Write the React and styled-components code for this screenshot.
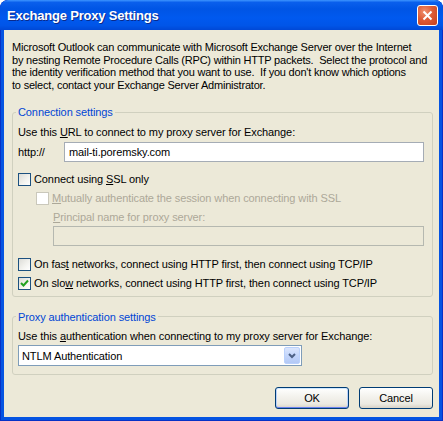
import React from 'react';
import styled, { createGlobalStyle } from 'styled-components';

const GlobalStyle = createGlobalStyle`
  html, body {
    margin: 0;
    padding: 0;
    background: #ffffff;
  }
  body {
    font-family: "Liberation Sans", Arial, sans-serif;
    font-size: 11px;
    letter-spacing: -0.1px;
    color: #000;
  }
`;

const Window = styled.div`
  width: 443px;
  height: 421px;
  box-sizing: border-box;
  display: flex;
  flex-direction: column;
  background: #0554e2;
  border-radius: 8px 8px 0 0;
  box-shadow: inset 0 0 0 1px #0731c6;
  overflow: hidden;
`;

const TitleBar = styled.div`
  height: 30px;
  flex: none;
  display: flex;
  align-items: center;
  justify-content: space-between;
  padding: 0 5px 0 7px;
  border-radius: 8px 8px 0 0;
  background: linear-gradient(
    to bottom,
    #3d95ff 0%,
    #0a5fec 8%,
    #0055e5 30%,
    #0059ef 60%,
    #0055e8 85%,
    #0048d6 100%
  );
`;

const Title = styled.span`
  color: #fff;
  font-weight: bold;
  font-size: 13px;
  text-shadow: 1px 1px 0 #0b2a8a;
  letter-spacing: -0.2px;
`;

const CloseButton = styled.div`
  width: 21px;
  height: 21px;
  box-sizing: border-box;
  border: 1px solid #fff;
  border-radius: 3px;
  display: flex;
  align-items: center;
  justify-content: center;
  background: radial-gradient(circle at 35% 30%, #f0916f 0%, #dd5b36 45%, #c4401c 100%);
`;

const Client = styled.div`
  flex: 1;
  margin: 0 4px 4px;
  background: #ece9d8;
  padding: 11px 6px 0 8px;
  display: flex;
  flex-direction: column;
`;

const Intro = styled.p`
  margin: 0;
  line-height: 12.5px;
  white-space: nowrap;
  letter-spacing: -0.2px;
`;

const Group = styled.fieldset`
  margin: ${p => p.$top}px 0 0;
  padding: 7px 8px ${p => p.$bottom}px 5px;
  border: 1px solid #d0d0bf;
  border-radius: 3px;
  min-width: 0;
`;

const Legend = styled.legend`
  color: #0046d5;
  padding: 0 2px;
  margin-left: -2px;
  line-height: 12.5px;
`;

const Text = styled.div`
  line-height: 13px;
  margin-top: ${p => p.$top || 0}px;
  margin-left: ${p => p.$left || 0}px;
  color: ${p => (p.$disabled ? '#aca899' : '#000')};
`;

const UrlRow = styled.div`
  display: flex;
  align-items: center;
  margin-top: 3px;
`;

const Prefix = styled.span`
  width: 46px;
  flex: none;
`;

const TextBox = styled.div`
  flex: 1;
  height: 20px;
  box-sizing: border-box;
  border: 1px solid ${p => (p.$disabled ? '#b5b8b0' : '#a5acb5')};
  background: ${p => (p.$disabled ? '#ece9d8' : '#fff')};
  display: flex;
  align-items: center;
  padding-left: 4px;
  margin-top: ${p => p.$top || 0}px;
  margin-left: ${p => p.$left || 0}px;
`;

const CheckRow = styled.label`
  display: flex;
  align-items: center;
  gap: 3px;
  height: 13px;
  margin-top: ${p => p.$top}px;
  margin-left: ${p => p.$left || 0}px;
  color: ${p => (p.$disabled ? '#aca899' : '#000')};
`;

const Box = styled.span`
  width: 13px;
  height: 13px;
  box-sizing: border-box;
  flex: none;
  display: flex;
  align-items: center;
  justify-content: center;
  border: 1px solid ${p => (p.$disabled ? '#cac8bb' : '#1c5180')};
  background: ${p =>
    p.$disabled ? '#fff' : 'linear-gradient(135deg, #dcdcd7 0%, #f4f4f0 60%, #ffffff 100%)'};
`;

const Select = styled.div`
  width: 284px;
  height: 21px;
  box-sizing: border-box;
  margin-top: 2px;
  border: 1px solid #7f9db9;
  background: #fff;
  display: flex;
  align-items: center;
  justify-content: space-between;
  padding: 1px 1px 1px 3px;
`;

const DropButton = styled.span`
  width: 16px;
  height: 17px;
  box-sizing: border-box;
  border: 1px solid #bad1fc;
  border-radius: 2px;
  background: linear-gradient(to bottom, #dbe6fd 0%, #c4d6fb 50%, #b3c9f6 100%);
  display: flex;
  align-items: center;
  justify-content: center;
`;

const ButtonBar = styled.div`
  display: flex;
  justify-content: flex-end;
  gap: 10px;
  margin-top: 12px;
`;

const Button = styled.div`
  width: 74px;
  height: 22px;
  box-sizing: border-box;
  border: 1px solid #003c74;
  border-radius: 3px;
  display: flex;
  align-items: center;
  justify-content: center;
  background: linear-gradient(to bottom, #ffffff 0%, #f4f3ee 40%, #ebe9e1 80%, #d8d2c6 100%);
  box-shadow: ${p =>
    p.$default ? 'inset 0 1px 0 #cee7ff, inset 0 -1px 0 #6982ee, inset 1px 0 0 #b9d1fa, inset -1px 0 0 #b9d1fa' : 'none'};
`;

const Check = () => (
  <svg width="9" height="9" viewBox="0 0 9 9">
    <path d="M1 4 L3.5 6.5 L8 1.5" fill="none" stroke="#21a121" strokeWidth="2" />
  </svg>
);

const Checkbox = ({ checked, disabled, top, left, children }) => (
  <CheckRow $top={top} $left={left} $disabled={disabled}>
    <Box $disabled={disabled}>{checked && <Check />}</Box>
    <span>{children}</span>
  </CheckRow>
);

export default function App() {
  return (
    <>
      <GlobalStyle />
      <Window>
        <TitleBar>
          <Title>Exchange Proxy Settings</Title>
          <CloseButton>
            <svg width="11" height="11" viewBox="0 0 11 11">
              <path d="M1.5 1.5 L9.5 9.5 M9.5 1.5 L1.5 9.5" stroke="#fff" strokeWidth="2" />
            </svg>
          </CloseButton>
        </TitleBar>
        <Client>
          <Intro>
            Microsoft Outlook can communicate with Microsoft Exchange Server over the Internet
            <br />
            by nesting Remote Procedure Calls (RPC) within HTTP packets.&nbsp; Select the protocol and
            <br />
            the identity verification method that you want to use.&nbsp; If you don't know which options
            <br />
            to select, contact your Exchange Server Administrator.
          </Intro>

          <Group $top={15} $bottom={6}>
            <Legend>Connection settings</Legend>
            <Text>
              Use this <u>U</u>RL to connect to my proxy server for Exchange:
            </Text>
            <UrlRow>
              <Prefix>http://</Prefix>
              <TextBox>mail-ti.poremsky.com</TextBox>
            </UrlRow>
            <Checkbox top={11}>
              Connect using <u>S</u>SL only
            </Checkbox>
            <Checkbox top={6} left={18} disabled>
              <u>M</u>utually authenticate the session when connecting with SSL
            </Checkbox>
            <Text $top={6} $left={35} $disabled>
              <u>P</u>rincipal name for proxy server:
            </Text>
            <TextBox $top={2} $left={35} $disabled />
            <Checkbox top={12}>
              On fas<u>t</u> networks, connect using HTTP first, then connect using TCP/IP
            </Checkbox>
            <Checkbox top={6} checked>
              On slo<u>w</u> networks, connect using HTTP first, then connect using TCP/IP
            </Checkbox>
          </Group>

          <Group $top={14} $bottom={8}>
            <Legend>Proxy authentication settings</Legend>
            <Text>
              Use this <u>a</u>uthentication when connecting to my proxy server for Exchange:
            </Text>
            <Select>
              <span>NTLM Authentication</span>
              <DropButton>
                <svg width="8" height="6" viewBox="0 0 8 6">
                  <path d="M1 1 L4 4 L7 1" fill="none" stroke="#4d6185" strokeWidth="2" />
                </svg>
              </DropButton>
            </Select>
          </Group>

          <ButtonBar>
            <Button $default>OK</Button>
            <Button>Cancel</Button>
          </ButtonBar>
        </Client>
      </Window>
    </>
  );
}
